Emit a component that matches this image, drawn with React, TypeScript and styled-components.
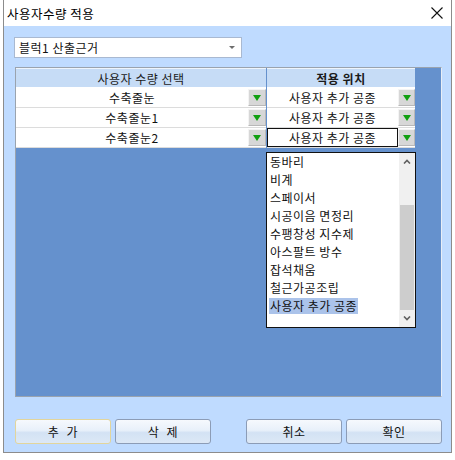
import React from 'react';
import styled, { createGlobalStyle } from 'styled-components';

const GlobalStyle = createGlobalStyle`
    html, body {
        margin: 0;
        padding: 0;
        background: #ffffff;
        font-family: "Noto Sans CJK KR", "Noto Sans", sans-serif;
        letter-spacing: 0.5px;
    }
`;

const Page = styled.div`
    width: 455px;
    height: 460px;
    padding-left: 3px;
    box-sizing: border-box;
    overflow: hidden;
`;

const Window = styled.div`
    width: 449px;
    height: 453px;
    border: 1px solid #8c8c8c;
    border-top: none;
    box-sizing: border-box;
    display: flex;
    flex-direction: column;
    background: #bfdbff;
`;

const TitleBar = styled.div`
    height: 26px;
    flex-shrink: 0;
    background: #ffffff;
    display: flex;
    align-items: center;
    justify-content: space-between;
    padding: 0 8px 0 3px;
`;

const Title = styled.span`
    font-size: 12.5px;
    color: #000;
`;

const Body = styled.div`
    flex: 1;
    display: flex;
    flex-direction: column;
    padding: 11px 8px 9px 10px;
`;

const Combo = styled.div`
    width: 228px;
    height: 21px;
    box-sizing: border-box;
    background: #fff;
    border: 1px solid #a9b9d1;
    display: flex;
    align-items: center;
    justify-content: space-between;
    padding: 0 6px 0 4px;
    font-size: 12px;
    color: #111;
`;

const ComboArrow = styled.span`
    width: 0;
    height: 0;
    border-left: 3px solid transparent;
    border-right: 3px solid transparent;
    border-top: 3px solid #6d6d6d;
`;

const Grid = styled.div`
    position: relative;
    margin: 9px 0 0 1px;
    width: 427px;
    height: 330px;
    box-sizing: border-box;
    border: 1px solid #9aa3ae;
    border-right-color: #e8eef6;
    background: #6591cd;
    display: flex;
    flex-direction: column;
`;

const Row = styled.div`
    display: flex;
    height: 20px;
    gap: 1px;
`;

const HeaderCell = styled.div<{ $w: number; $bold?: boolean }>`
    width: ${p => p.$w}px;
    box-sizing: border-box;
    background: #c6dcf6;
    border-top: 1px solid #eef5fd;
    border-bottom: 1px solid #ffffff;
    display: flex;
    align-items: center;
    justify-content: center;
    font-size: 12px;
    font-weight: ${p => (p.$bold ? 700 : 400)};
    color: #1a1a1a;
`;

const Cell = styled.div<{ $w: number }>`
    width: ${p => p.$w}px;
    display: flex;
    background: #fff;
    border-bottom: 1px solid #dcdcdc;
    box-sizing: border-box;
`;

const CellText = styled.div<{ $focus?: boolean }>`
    flex: 1;
    display: flex;
    align-items: center;
    justify-content: center;
    font-size: 12px;
    color: #111;
    box-sizing: border-box;
    border: 1px solid ${p => (p.$focus ? '#111' : 'transparent')};
`;

const DropButton = styled.div<{ $w: number }>`
    width: ${p => p.$w}px;
    margin: 1px 0;
    box-sizing: border-box;
    background: #d7d7d7;
    border: 1px solid #f4f4f4;
    border-right-color: #b8b8b8;
    border-bottom-color: #b8b8b8;
    display: flex;
    align-items: center;
    justify-content: center;
`;

const GreenArrow = styled.span`
    width: 0;
    height: 0;
    border-left: 4px solid transparent;
    border-right: 4px solid transparent;
    border-top: 6px solid #12a012;
`;

const ListBox = styled.div`
    position: absolute;
    left: 250px;
    top: 84px;
    width: 150px;
    height: 176px;
    box-sizing: border-box;
    background: #fff;
    border: 1px solid #111;
    display: flex;
`;

const Items = styled.div`
    flex: 1;
    display: flex;
    flex-direction: column;
    padding-left: 2px;
`;

const Item = styled.div`
    height: 18px;
    display: flex;
    align-items: center;
    font-size: 12px;
    color: #111;
`;

const ItemLabel = styled.span<{ $selected?: boolean }>`
    padding: 0 1px;
    line-height: 16px;
    background: ${p => (p.$selected ? '#abc3ea' : 'transparent')};
`;

const ScrollBar = styled.div`
    width: 16px;
    background: #f0f0f0;
    display: flex;
    flex-direction: column;
`;

const ScrollArrow = styled.div`
    height: 17px;
    display: flex;
    align-items: center;
    justify-content: center;
`;

const ScrollTrack = styled.div`
    flex: 1;
    display: flex;
    flex-direction: column;
    padding-top: 35px;
`;

const ScrollThumb = styled.div`
    flex: 1;
    margin: 0 1px;
    background: #cdcdcd;
`;

const Footer = styled.div`
    margin-top: 22px;
    margin-left: 1px;
    width: 427px;
    display: flex;
    justify-content: space-between;
`;

const ButtonGroup = styled.div`
    display: flex;
    gap: 4px;
`;

const Button = styled.div<{ $focus?: boolean }>`
    width: 96px;
    height: 25px;
    box-sizing: border-box;
    border: 1px solid ${p => (p.$focus ? '#e2d59c' : '#8c9cb6')};
    border-radius: 3px;
    background: linear-gradient(#f6f9fd 0%, #e8f0fa 45%, #d3e2f4 55%, #dce8f6 100%);
    display: flex;
    align-items: center;
    justify-content: center;
    font-size: 12px;
    color: #111;
    word-spacing: 4px;
`;

const CloseIcon = () => (
    <svg width="12" height="12" viewBox="0 0 12 12">
        <path d="M0.5 0.5 L11.5 11.5 M11.5 0.5 L0.5 11.5" stroke="#111" strokeWidth="1.1" fill="none" />
    </svg>
);

const Chevron = ({ up }: { up?: boolean }) => (
    <svg width="8" height="5" viewBox="0 0 8 5">
        <path d={up ? 'M1 4.5 L4 1.5 L7 4.5' : 'M1 0.5 L4 3.5 L7 0.5'} stroke="#606060" strokeWidth="1.6" fill="none" />
    </svg>
);

const rows = ['수축줄눈', '수축줄눈1', '수축줄눈2'];

const options = [
    '동바리',
    '비계',
    '스페이서',
    '시공이음 면정리',
    '수팽창성 지수제',
    '아스팔트 방수',
    '잡석채움',
    '철근가공조립',
    '사용자 추가 공종',
];

export default function App() {
    return (
        <Page>
            <GlobalStyle />
            <Window>
                <TitleBar>
                    <Title>사용자수량 적용</Title>
                    <CloseIcon />
                </TitleBar>
                <Body>
                    <Combo>
                        <span>블럭1 산출근거</span>
                        <ComboArrow />
                    </Combo>
                    <Grid>
                        <Row>
                            <HeaderCell $w={250}>사용자 수량 선택</HeaderCell>
                            <HeaderCell $w={148} $bold>적용 위치</HeaderCell>
                        </Row>
                        {rows.map((name, i) => (
                            <Row key={name}>
                                <Cell $w={250}>
                                    <CellText>{name}</CellText>
                                    <DropButton $w={18}><GreenArrow /></DropButton>
                                </Cell>
                                <Cell $w={148}>
                                    <CellText $focus={i === 2}>사용자 추가 공종</CellText>
                                    <DropButton $w={17}><GreenArrow /></DropButton>
                                </Cell>
                            </Row>
                        ))}
                        <ListBox>
                            <Items>
                                {options.map((o, i) => (
                                    <Item key={o}>
                                        <ItemLabel $selected={i === options.length - 1}>{o}</ItemLabel>
                                    </Item>
                                ))}
                            </Items>
                            <ScrollBar>
                                <ScrollArrow><Chevron up /></ScrollArrow>
                                <ScrollTrack><ScrollThumb /></ScrollTrack>
                                <ScrollArrow><Chevron /></ScrollArrow>
                            </ScrollBar>
                        </ListBox>
                    </Grid>
                    <Footer>
                        <ButtonGroup>
                            <Button $focus>추 가</Button>
                            <Button>삭 제</Button>
                        </ButtonGroup>
                        <ButtonGroup>
                            <Button>취소</Button>
                            <Button>확인</Button>
                        </ButtonGroup>
                    </Footer>
                </Body>
            </Window>
        </Page>
    );
}
